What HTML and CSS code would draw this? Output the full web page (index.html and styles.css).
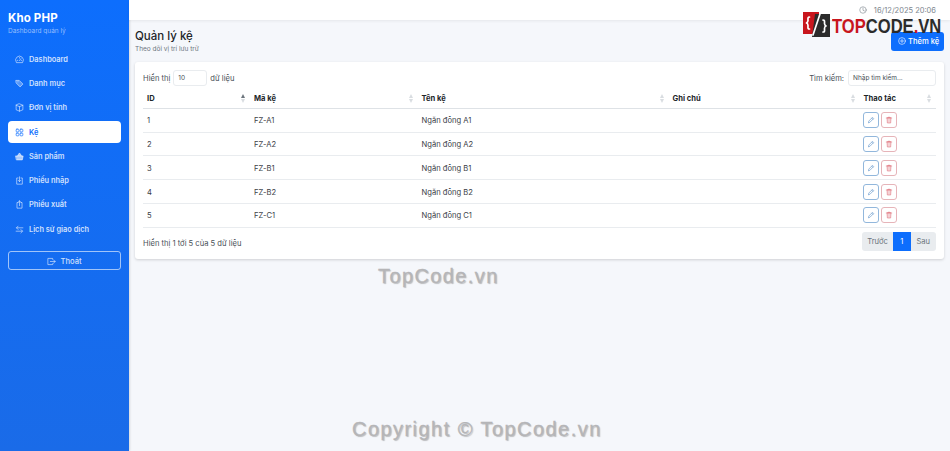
FILE: index.html
```html
<!DOCTYPE html>
<html lang="vi">
<head>
<meta charset="utf-8">
<title>Quản lý kệ</title>
<link rel="stylesheet" href="styles.css">
</head>
<body>
<div class="app">
  <aside class="sidebar">
    <div class="brand">
      <div class="brand-name">Kho PHP</div>
      <div class="brand-sub">Dashboard quản lý</div>
    </div>
    <nav class="nav">
      <a class="nav-item"><svg viewBox="0 0 16 16"><path d="M2.200 13a7 7 0 1 1 11.600 0zM8 10l2.500-3.500M4 9.500h1M11 9.500h1M8 4.500v1"/></svg>Dashboard</a>
      <a class="nav-item"><svg viewBox="0 0 16 16"><path class="fill" d="M2 2.500h5.500l6.500 6.500-5 5L2.500 7.500zM5 5h.5"/></svg>Danh mục</a>
      <a class="nav-item"><svg viewBox="0 0 16 16"><path d="M8 1.500l6 2.500v8l-6 2.500-6-2.500V4zM2 4l6 2.500L14 4M8 6.500v8"/></svg>Đơn vị tính</a>
      <a class="nav-item active"><svg viewBox="0 0 16 16"><rect x="2" y="2" width="5" height="5" rx="1.500"/><rect x="9" y="2" width="5" height="5" rx="1.500"/><rect x="2" y="9" width="5" height="5" rx="1.500"/><rect x="9" y="9" width="5" height="5" rx="1.500"/></svg>Kệ</a>
      <a class="nav-item"><svg viewBox="0 0 16 16"><path class="fill-solid" d="M1.500 7h13l-1.500 7H3zM4.500 7L7 2.500h2L11.500 7"/></svg>Sản phẩm</a>
      <a class="nav-item"><svg viewBox="0 0 16 16"><path d="M5.500 3.500h-2.500v11h10v-11h-2.500M8 1.500v8M5.500 7.500L8 10l2.500-2.500"/></svg>Phiếu nhập</a>
      <a class="nav-item"><svg viewBox="0 0 16 16"><path d="M5.500 4.500h-2v10h9v-10h-2M8 10V1.500M5.500 4L8 1.500 10.500 4"/></svg>Phiếu xuất</a>
      <a class="nav-item"><svg viewBox="0 0 16 16"><path d="M14 5H3M5.500 2L2.500 5l3 3M2 11h11M10.500 8l3 3-3 3"/></svg>Lịch sử giao dịch</a>
    </nav>
    <button class="logout"><svg viewBox="0 0 16 16"><path d="M10 4V2.500H1.500v11H10V12M6 8h8.500M11.500 5l3 3-3 3"/></svg>Thoát</button>
  </aside>
  <div class="main">
    <header class="topbar">
      <svg class="clock" viewBox="0 0 16 16"><circle cx="8" cy="8" r="6.500"/><path d="M8 4v4.500l3 1.500"/></svg>
      <span>16/12/2025 20:06</span>
    </header>
    <section class="content">
      <div class="page-head">
        <div>
          <h1>Quản lý kệ</h1>
          <p>Theo dõi vị trí lưu trữ</p>
        </div>
        <button class="add"><svg viewBox="0 0 16 16"><circle cx="8" cy="8" r="6.800"/><path d="M8 4.500v7M4.500 8h7"/></svg>Thêm kệ</button>
      </div>
      <div class="card">
        <div class="tools">
          <label class="length">Hiển thị <span class="box len-box">10</span> dữ liệu</label>
          <label class="search">Tìm kiếm: <span class="box search-box">Nhập tìm kiếm...</span></label>
        </div>
        <table>
          <thead>
            <tr>
              <th class="c-id">ID<i class="sort asc"></i></th>
              <th class="c-code">Mã kệ<i class="sort"></i></th>
              <th class="c-name">Tên kệ<i class="sort"></i></th>
              <th class="c-note">Ghi chú<i class="sort"></i></th>
              <th class="c-act">Thao tác<i class="sort"></i></th>
            </tr>
          </thead>
          <tbody>
            <tr><td>1</td><td>FZ-A1</td><td>Ngăn đông A1</td><td></td><td><div class="acts"><button class="act edit"><svg viewBox="0 0 16 16"><path d="M3 13l.7-3L11 2.700l2.300 2.300L6 12.300zM9.500 4.200l2.300 2.300"/></svg></button><button class="act del"><svg viewBox="0 0 16 16"><path class="fill" d="M2.500 4h11M6 4V2.500h4V4M4 4l.7 10h6.600L12 4z"/></svg></button></div></td></tr>
            <tr><td>2</td><td>FZ-A2</td><td>Ngăn đông A2</td><td></td><td><div class="acts"><button class="act edit"><svg viewBox="0 0 16 16"><path d="M3 13l.7-3L11 2.700l2.300 2.300L6 12.300zM9.500 4.200l2.300 2.300"/></svg></button><button class="act del"><svg viewBox="0 0 16 16"><path class="fill" d="M2.500 4h11M6 4V2.500h4V4M4 4l.7 10h6.600L12 4z"/></svg></button></div></td></tr>
            <tr><td>3</td><td>FZ-B1</td><td>Ngăn đông B1</td><td></td><td><div class="acts"><button class="act edit"><svg viewBox="0 0 16 16"><path d="M3 13l.7-3L11 2.700l2.300 2.300L6 12.300zM9.500 4.200l2.300 2.300"/></svg></button><button class="act del"><svg viewBox="0 0 16 16"><path class="fill" d="M2.500 4h11M6 4V2.500h4V4M4 4l.7 10h6.600L12 4z"/></svg></button></div></td></tr>
            <tr><td>4</td><td>FZ-B2</td><td>Ngăn đông B2</td><td></td><td><div class="acts"><button class="act edit"><svg viewBox="0 0 16 16"><path d="M3 13l.7-3L11 2.700l2.300 2.300L6 12.300zM9.500 4.200l2.300 2.300"/></svg></button><button class="act del"><svg viewBox="0 0 16 16"><path class="fill" d="M2.500 4h11M6 4V2.500h4V4M4 4l.7 10h6.600L12 4z"/></svg></button></div></td></tr>
            <tr><td>5</td><td>FZ-C1</td><td>Ngăn đông C1</td><td></td><td><div class="acts"><button class="act edit"><svg viewBox="0 0 16 16"><path d="M3 13l.7-3L11 2.700l2.300 2.300L6 12.300zM9.500 4.200l2.300 2.300"/></svg></button><button class="act del"><svg viewBox="0 0 16 16"><path class="fill" d="M2.500 4h11M6 4V2.500h4V4M4 4l.7 10h6.600L12 4z"/></svg></button></div></td></tr>
          </tbody>
        </table>
        <div class="foot">
          <span class="foot-info">Hiển thị 1 tới 5 của 5 dữ liệu</span>
          <div class="pager"><span class="pg prev">Trước</span><span class="pg on">1</span><span class="pg next">Sau</span></div>
        </div>
      </div>
    </section>
  </div>
</div>
<div class="logo">
  <svg class="logo-mark" viewBox="0 0 27 25">
    <rect x="0" y="0" width="16" height="22" fill="#c8161d"/>
    <path d="M12 2h15v23H9z" fill="#2b2b2b"/>
    <path d="M6.500 5c-2 0-1.500 2-1.500 3.500S3.500 11 3.500 11 5 11.500 5 13.500 4.500 17 6.500 17M20 8c2 0 1.500 2 1.500 3.500s1.500 2.500 1.500 2.500-1.500.5-1.500 2.500.5 3.500-1.500 3.500M17 2l-7 21" fill="none" stroke="#fff" stroke-width="1.700"/>
  </svg>
  <span class="logo-text"><span class="logo-red">TOP</span>CODE<span class="logo-red">.</span>VN</span>
</div>
<div class="wm wm-1">TopCode.vn</div>
<div class="wm wm-2">Copyright © TopCode.vn</div>
</body>
</html>
```
FILE: styles.css
```css
* { box-sizing: border-box; }
html, body { margin: 0; height: 100%; overflow: hidden; }
body { font-family: Inter, "Noto Sans", sans-serif; color: #212529; background: #f5f7fb; font-size: 7.600px; }
svg { display: block; fill: none; stroke: currentColor; stroke-width: 1.200; stroke-linecap: round; stroke-linejoin: round; }
.fill { fill: currentColor; fill-opacity: .35; }
.fill-solid { fill: currentColor; fill-opacity: .8; }

.app { display: flex; width: 950px; height: 451px; }

.sidebar { width: 129px; flex: none; padding: 12px 8px 0; color: #fff; background: linear-gradient(180deg, #0d6efd 0%, #1a6be8 100%); box-shadow: 1px 0 2px rgba(0,0,0,.12); }
.brand { height: 36px; }
.brand-name { font-size: 11.500px; line-height: 13px; font-weight: 700; letter-spacing: .15px; }
.brand-sub { font-size: 6.500px; line-height: 9px; margin-top: 2px; color: rgba(255,255,255,.55); }
.nav { display: flex; flex-direction: column; gap: 2px; }
.nav-item { display: flex; align-items: center; gap: 5px; height: 22.300px; padding-left: 7px; border-radius: 4px; font-size: 7.400px; font-weight: 600; color: rgba(255,255,255,.8); }
.nav-item svg { width: 9px; height: 9px; flex: none; }
.nav-item.active { background: #fff; color: #0d6efd; }
.logout { display: flex; align-items: center; justify-content: center; gap: 4px; width: 113px; height: 19px; margin-top: 11px; padding: 1px 0 0; background: transparent; border: 1px solid rgba(255,255,255,.6); border-radius: 3px; color: rgba(255,255,255,.8); font: 500 7.600px Inter, sans-serif; }
.logout svg { width: 9px; height: 9px; }

.main { flex: 1; min-width: 0; display: flex; flex-direction: column; }
.topbar { height: 20px; flex: none; display: flex; align-items: center; justify-content: flex-end; gap: 7px; padding: 0 14px 0 0; background: #fff; color: #7d868e; font-size: 7.500px; box-shadow: 0 1px 3px rgba(0,0,0,.07); }
.clock { width: 8px; height: 8px; }

.content { padding: 9px 6px 0; }
.page-head { display: flex; justify-content: space-between; align-items: flex-start; height: 33px; }
h1 { margin: 1px 0 0; font-size: 11.500px; line-height: 13px; font-weight: 500; }
.page-head p { margin: 2px 0 0; font-size: 6.500px; line-height: 9px; color: #6c757d; }
.add { display: flex; align-items: center; gap: 2px; width: 53px; height: 18.500px; margin-top: 3px; padding: 0 0 0 7px; background: #0d6efd; color: #fff; border: 0; border-radius: 3px; font: 500 7.600px Inter, sans-serif; }
.add svg { width: 8px; height: 8px; }

.card { background: #fff; border-radius: 3px; padding: 8px 8px 8px; box-shadow: 0 1px 3px rgba(0,0,0,.16); }
.tools { display: flex; justify-content: space-between; align-items: center; height: 16px; color: #495057; font-size: 7.600px; }
.length, .search { display: flex; align-items: center; gap: 3px; }
.search { gap: 4px; }
.box { display: block; height: 16px; border: 1px solid #e9ecef; border-radius: 3px; padding-left: 4px; font-size: 6.500px; color: #495057; line-height: 15px; }
.len-box { width: 34px; }
.search-box { width: 88px; }

table { width: 100%; border-collapse: collapse; table-layout: fixed; margin-top: 2px; font-size: 7.600px; }
th { position: relative; height: 20.300px; padding: 2px 4px 0; text-align: left; font-weight: 700; font-size: 7.600px; color: #212529; border-bottom: 1px solid #dee2e6; }
td { height: 23.800px; padding: 1px 4px 0; color: #3a4046; border-bottom: 1px solid #e9ecef; }
.c-id { width: 107px; }
.c-code { width: 167.500px; }
.c-name { width: 251px; }
.c-note { width: 191px; }
.c-act { width: 76.500px; }
.sort::before, .sort::after { content: ""; position: absolute; right: 5px; border-left: 2.500px solid transparent; border-right: 2.500px solid transparent; }
.sort::before { top: 6px; border-bottom: 4px solid #d9dde1; }
.sort::after { top: 11px; border-top: 4px solid #d9dde1; }
.sort.asc::before { border-bottom-color: #6c757d; }

.acts { display: flex; gap: 2px; margin: -1px 0 0 -.5px; }
.act { width: 16px; height: 16px; padding: 0; display: flex; align-items: center; justify-content: center; background: #fff; border-radius: 3px; border: 1px solid; }
.act svg { width: 8px; height: 8px; }
.edit { border-color: #92b7dc; color: #5a90c8; }
.del { border-color: #e6b4b9; color: #e07a85; }

.foot { display: flex; justify-content: space-between; align-items: center; margin-top: 4px; color: #495057; font-size: 7.600px; }
.foot-info { padding-top: 5px; }
.pager { display: flex; height: 19px; background: #e9ecef; border-radius: 3px; overflow: hidden; }
.pg { display: flex; align-items: center; justify-content: center; color: #6c757d; font-size: 7.600px; }
.prev { width: 31px; }
.next { width: 25.500px; }
.pg.on { width: 17.500px; background: #0d6efd; color: #fff; }

.logo { position: absolute; left: 803px; top: 12px; display: flex; align-items: flex-start; gap: 2px; }
.logo-mark { width: 27px; height: 25px; stroke: none; }
.logo-text { display: block; margin-top: 4px; font: 700 19.500px/20px "Liberation Sans", sans-serif; color: #2b2b2b; transform: scaleX(.85); transform-origin: left center; }
.logo-red { color: #c8161d; }

.wm { position: absolute; font-family: "Liberation Sans", sans-serif; color: #b5b5b7; -webkit-text-stroke: .3px #b5b5b7; text-shadow: 1px 1px 1px rgba(120,120,120,.45); white-space: nowrap; }
.wm-1 { left: 378px; top: 265px; font-size: 20px; line-height: 22px; letter-spacing: 1.400px; }
.wm-2 { left: 352px; top: 417px; font-size: 20px; line-height: 24px; letter-spacing: 1.450px; }
```
